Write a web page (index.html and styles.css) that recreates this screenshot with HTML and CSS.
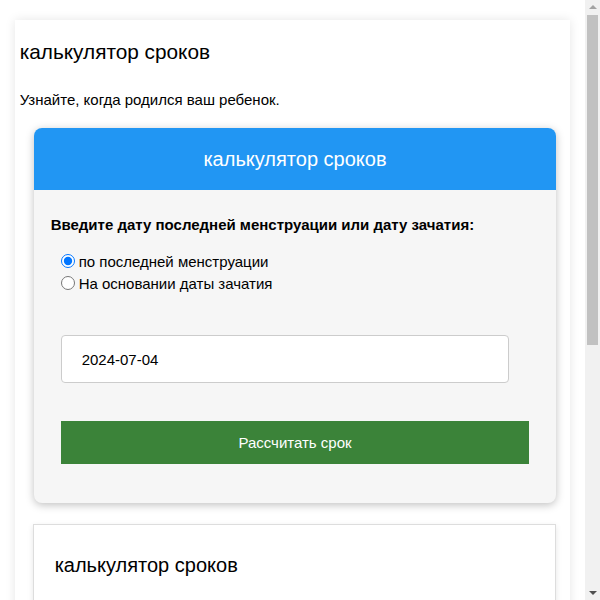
FILE: index.html
```html
<!DOCTYPE html>
<html lang="ru">
<head>
<meta charset="utf-8">
<title>калькулятор сроков</title>
<link rel="stylesheet" href="styles.css">
</head>
<body>
<div class="container">
  <h2 class="page-title">калькулятор сроков</h2>
  <p class="intro">Узнайте, когда родился ваш ребенок.</p>
  <div class="card">
    <div class="card-header">калькулятор сроков</div>
    <div class="card-body">
      <div class="label">Введите дату последней менструации или дату зачатия:</div>
      <div class="radios">
        <label class="radio-row"><input type="radio" name="m" checked> по последней менструации</label>
        <label class="radio-row"><input type="radio" name="m"> На основании даты зачатия</label>
      </div>
      <div class="form">
        <input class="date-input" type="text" value="2024-07-04">
        <button class="calc-btn">Рассчитать срок</button>
      </div>
    </div>
  </div>
  <div class="result">
    <h2 class="result-title">калькулятор сроков</h2>
  </div>
</div>
<div class="scrollbar" aria-hidden="true">
  <div class="sb-arrow sb-up"></div>
  <div class="sb-track"><div class="sb-thumb"></div></div>
  <div class="sb-arrow sb-down"></div>
</div>
</body>
</html>
```

FILE: styles.css
```css
html, body {
  margin: 0;
  padding: 0;
  background: #fff;
  font-family: "Liberation Sans", Arial, sans-serif;
  color: #000;
}
body {
  margin-right: 15px;
}
.container {
  width: 95%;
  margin: 20px auto;
  padding: 0 5px 20px;
  box-sizing: border-box;
  background: #fff;
  box-shadow: 0 0 10px rgba(0, 0, 0, 0.1);
}
.page-title {
  margin: 0;
  padding-top: 20px;
  font-size: 20.8px;
  line-height: 23px;
  font-weight: normal;
}
.intro {
  margin: 28px 0 20px;
  font-size: 15px;
  line-height: 17px;
}
.card {
  margin: 0 9px 0 14px;
  border-radius: 8px;
  overflow: hidden;
  background: #f6f6f6;
  box-shadow: 0 2px 8px rgba(0, 0, 0, 0.25);
}
.card-header {
  background: #2196f3;
  color: #fff;
  text-align: center;
  font-size: 20px;
  line-height: 23px;
  padding: 20px 0 19px;
}
.card-body {
  padding: 26px 17px 39px;
}
.label {
  font-weight: bold;
  font-size: 15px;
  line-height: 17px;
}
.radios {
  margin: 17px 0 0 10px;
  display: flex;
  flex-direction: column;
}
.radio-row {
  display: flex;
  align-items: center;
  height: 22px;
  font-size: 15px;
}
.radio-row input {
  margin: 0 4px 0 0;
  width: 14px;
  height: 14px;
}
.form {
  margin: 41px 10px 0;
  display: flex;
  flex-direction: column;
  align-items: flex-start;
}
.date-input {
  width: calc(100% - 20px);
  height: 48px;
  box-sizing: border-box;
  border: 1px solid #ccc;
  border-radius: 4px;
  background: #fff;
  padding: 0 20px;
  font-family: "Liberation Sans", Arial, sans-serif;
  font-size: 15px;
  color: #000;
}
.calc-btn {
  margin-top: 38px;
  width: 100%;
  height: 43px;
  border: none;
  background: #3b8339;
  color: #fff;
  font-family: "Liberation Sans", Arial, sans-serif;
  font-size: 15px;
}
.result {
  margin: 21px 9px 0 13px;
  border: 1px solid #ddd;
  background: #fff;
  box-shadow: 0 2px 6px rgba(0, 0, 0, 0.1);
  padding: 29px 21px 0;
  min-height: 440px;
}
.result-title {
  margin: 0;
  font-size: 20px;
  line-height: 23px;
  font-weight: normal;
}
.scrollbar {
  position: fixed;
  top: 0;
  right: 0;
  width: 15px;
  height: 100vh;
  background: #f1f1f1;
  display: flex;
  flex-direction: column;
}
.sb-arrow {
  height: 15px;
  position: relative;
}
.sb-up::after,
.sb-down::after {
  content: "";
  position: absolute;
  left: 4px;
  border-left: 4px solid transparent;
  border-right: 4px solid transparent;
}
.sb-up::after {
  top: 5px;
  border-bottom: 4px solid #a3a3a3;
}
.sb-down::after {
  top: 6px;
  border-top: 4px solid #505050;
}
.sb-track {
  flex: 1;
  padding: 0 2px;
}
.sb-thumb {
  height: 330px;
  background: #c1c1c1;
}
```
